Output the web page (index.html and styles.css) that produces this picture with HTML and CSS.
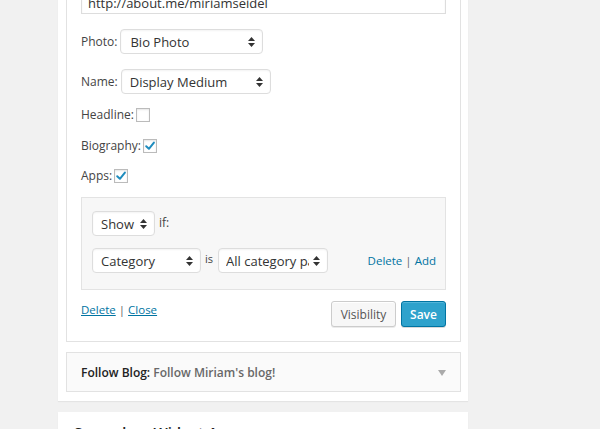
FILE: index.html
```html
<!DOCTYPE html>
<html lang="en">
<head>
<meta charset="utf-8">
<title>Widgets</title>
<link rel="stylesheet" href="styles.css">
</head>
<body>
<div class="page">
  <div class="sidebar">
    <div class="widget">
      <div class="widget-inside">
        <div class="url-input">http://about.me/miriamseidel</div>

        <div class="field-row row-photo">
          <span class="label">Photo:</span>
          <div class="select select-photo"><span class="select-text">Bio Photo</span><svg class="arrows" width="7" height="10" viewBox="0 0 7 10"><polygon points="0,4 3.5,0 7,4"/><polygon points="0,6 3.5,10 7,6"/></svg></div>
        </div>

        <div class="field-row row-name">
          <span class="label">Name:</span>
          <div class="select select-name"><span class="select-text">Display Medium</span><svg class="arrows" width="7" height="10" viewBox="0 0 7 10"><polygon points="0,4 3.5,0 7,4"/><polygon points="0,6 3.5,10 7,6"/></svg></div>
        </div>

        <div class="check-row row-headline">
          <span class="label">Headline:</span>
          <span class="checkbox"></span>
        </div>

        <div class="check-row row-bio">
          <span class="label">Biography:</span>
          <span class="checkbox"><svg width="14" height="14" viewBox="0 0 14 14"><path d="M3.2 7.2 L5.9 9.8 L10.9 3.6" /></svg></span>
        </div>

        <div class="check-row row-apps">
          <span class="label">Apps:</span>
          <span class="checkbox"><svg width="14" height="14" viewBox="0 0 14 14"><path d="M3.2 7.2 L5.9 9.8 L10.9 3.6" /></svg></span>
        </div>

        <div class="visibility-panel">
          <div class="rule-row">
            <div class="select select-show"><span class="select-text">Show</span><svg class="arrows" width="7" height="10" viewBox="0 0 7 10"><polygon points="0,4 3.5,0 7,4"/><polygon points="0,6 3.5,10 7,6"/></svg></div>
            <span class="small-word">if:</span>
          </div>
          <div class="rule-row rule-second">
            <div class="select select-category"><span class="select-text">Category</span><svg class="arrows" width="7" height="10" viewBox="0 0 7 10"><polygon points="0,4 3.5,0 7,4"/><polygon points="0,6 3.5,10 7,6"/></svg></div>
            <span class="small-word word-is">is</span>
            <div class="select select-all"><span class="select-text">All category pages</span><svg class="arrows" width="7" height="10" viewBox="0 0 7 10"><polygon points="0,4 3.5,0 7,4"/><polygon points="0,6 3.5,10 7,6"/></svg></div>
            <div class="rule-links"><a href="#">Delete</a> <span class="sep">|</span> <a href="#">Add</a></div>
          </div>
        </div>

        <div class="actions">
          <div class="control-links"><a class="ul" href="#">Delete</a> <span class="sep">|</span> <a class="ul" href="#">Close</a></div>
          <div class="buttons">
            <span class="button">Visibility</span>
            <span class="button button-primary">Save</span>
          </div>
        </div>
      </div>
    </div>

    <div class="widget widget-collapsed">
      <div class="widget-title"><span class="title-main">Follow Blog:</span> <span class="in-widget-title">Follow Miriam's blog!</span></div>
      <span class="toggle-arrow"></span>
    </div>
  </div>

  <div class="sidebar sidebar-next">
    <div class="sidebar-name">Secondary Widget Area</div>
  </div>
</div>
</body>
</html>
```

FILE: styles.css
```css
html, body {
  margin: 0;
  padding: 0;
  height: 100%;
  overflow: hidden;
}

body {
  background: #f1f1f1;
  font-family: "Open Sans", "Liberation Sans", sans-serif;
  font-size: 13px;
  color: #444;
}

.page {
  padding-left: 58px;
}

.sidebar {
  width: 410px;
  box-sizing: border-box;
  background: #fff;
  box-shadow: 0 1px 1px rgba(0, 0, 0, 0.05);
  margin-top: -30px;
  padding: 0 7px 9px 8px;
}

.widget {
  border: 1px solid #e2e2e2;
  background: #fff;
}

.widget-inside {
  padding: 15px 14px 14px;
}

.url-input {
  height: 28px;
  box-sizing: border-box;
  border: 1px solid #ddd;
  box-shadow: inset 0 1px 2px rgba(0, 0, 0, 0.07);
  padding: 4px 6px 0;
  line-height: 24px;
  color: #333;
  font-size: 13px;
}

.field-row {
  display: flex;
  align-items: center;
  gap: 3px;
  height: 25px;
}

.row-photo { margin-top: 15px; }
.row-name { margin-top: 15px; }

.label {
  color: #444;
  font-size: 12px;
  line-height: 14px;
}

.select {
  display: flex;
  align-items: center;
  height: 25px;
  box-sizing: border-box;
  border: 1px solid #ddd;
  border-radius: 4px;
  background: #fff;
  box-shadow: inset 0 1px 2px rgba(0, 0, 0, 0.05);
  padding: 0 7px 0 8px;
  color: #333;
}

.select-text {
  flex: 1;
  overflow: hidden;
  white-space: nowrap;
}

.arrows {
  flex: none;
  fill: #333;
}

.select-photo { width: 143px; padding-left: 9px; }
.select-name { width: 150px; }
.select-show { width: 63px; }
.select-category { width: 109px; }
.select-all { width: 110px; padding-left: 7px; }
.select-all .select-text { margin-right: 4px; }

.check-row {
  display: flex;
  align-items: center;
  gap: 2px;
  height: 14px;
}

.row-headline { margin-top: 14px; }
.row-bio { margin-top: 17px; }
.row-apps { margin-top: 16px; }

.checkbox {
  width: 14px;
  height: 14px;
  box-sizing: border-box;
  border: 1px solid #bbb;
  background: #fff;
  box-shadow: inset 0 1px 2px rgba(0, 0, 0, 0.1);
  position: relative;
}

.checkbox svg {
  position: absolute;
  left: -1px;
  top: -1px;
}

.checkbox path {
  fill: none;
  stroke: #1e8cbe;
  stroke-width: 2;
  stroke-linecap: round;
  stroke-linejoin: round;
}

.visibility-panel {
  margin-top: 14px;
  border: 1px solid #e3e3e3;
  background: #f7f7f7;
  padding: 13px 9px 16px 10px;
}

.rule-row {
  display: flex;
  align-items: center;
}

.rule-second {
  margin-top: 12px;
}

.small-word {
  font-size: 12px;
  color: #444;
  margin-left: 4px;
  position: relative;
  top: -1px;
}

.word-is {
  font-size: 11px;
  margin: 0 5px 0 4px;
  top: -2px;
}

.rule-links {
  margin-left: auto;
  font-size: 11.5px;
}

a {
  color: #0074a2;
  text-decoration: none;
}

.sep {
  color: #666;
}

.actions {
  margin-top: 11px;
  display: flex;
  justify-content: space-between;
  align-items: flex-start;
}

.control-links {
  font-size: 11.5px;
  line-height: 17px;
}

a.ul {
  text-decoration: underline;
}

.buttons {
  display: flex;
  gap: 5px;
}

.button {
  display: flex;
  align-items: center;
  justify-content: center;
  height: 26px;
  box-sizing: border-box;
  border: 1px solid #ccc;
  border-radius: 3px;
  background: #f7f7f7;
  box-shadow: inset 0 1px 0 #fff, 0 1px 0 rgba(0, 0, 0, 0.08);
  color: #555;
  font-size: 12px;
  width: 65px;
}

.button-primary {
  width: 45px;
  background: #2ea2cc;
  border-color: #0074a2;
  box-shadow: inset 0 1px 0 rgba(120, 200, 230, 0.5), 0 1px 0 rgba(0, 0, 0, 0.15);
  color: #fff;
  font-weight: 600;
}

.widget-collapsed {
  margin-top: 10px;
  background: #fafafa;
  height: 40px;
  box-sizing: border-box;
  display: flex;
  align-items: center;
  justify-content: space-between;
  padding: 0 14px;
}

.widget-title {
  font-size: 12px;
  font-weight: 600;
  color: #222;
}

.in-widget-title {
  color: #686868;
}

.toggle-arrow {
  width: 0;
  height: 0;
  border-left: 4px solid transparent;
  border-right: 4px solid transparent;
  border-top: 6px solid #aaa;
  margin-top: 2px;
}

.sidebar-next {
  margin-top: 11px;
  padding: 10px 16px 30px;
}

.sidebar-name {
  font-size: 15px;
  font-weight: 600;
  color: #222;
}
```
